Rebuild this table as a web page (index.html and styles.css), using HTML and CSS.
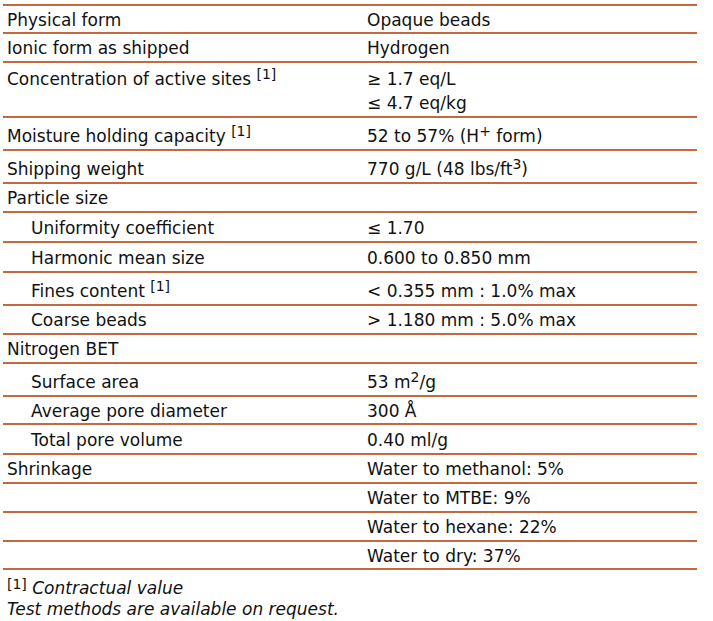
FILE: index.html
```html
<!DOCTYPE html>
<html lang="en">
<head>
<meta charset="utf-8">
<title>Properties</title>
<link rel="stylesheet" href="styles.css">
</head>
<body>
<div class="sheet">
  <table class="props">
    <tbody>
      <tr class="r28"><td class="label">Physical form</td><td class="value">Opaque beads</td></tr>
      <tr><td class="label">Ionic form as shipped</td><td class="value">Hydrogen</td></tr>
      <tr class="double"><td class="label">Concentration of active sites <sup>[1]</sup></td><td class="value">≥ 1.7 eq/L<br>≤ 4.7 eq/kg</td></tr>
      <tr class="tall"><td class="label">Moisture holding capacity <sup>[1]</sup></td><td class="value">52 to 57% (H<sup>+</sup> form)</td></tr>
      <tr class="tall"><td class="label">Shipping weight</td><td class="value">770 g/L (48 lbs/ft<sup>3</sup>)</td></tr>
      <tr><td class="label">Particle size</td><td class="value"></td></tr>
      <tr class="r30"><td class="label sub">Uniformity coefficient</td><td class="value">≤ 1.70</td></tr>
      <tr class="r30"><td class="label sub">Harmonic mean size</td><td class="value">0.600 to 0.850 mm</td></tr>
      <tr class="tall"><td class="label sub">Fines content <sup>[1]</sup></td><td class="value">&lt; 0.355 mm : 1.0% max</td></tr>
      <tr><td class="label sub">Coarse beads</td><td class="value">&gt; 1.180 mm : 5.0% max</td></tr>
      <tr><td class="label">Nitrogen BET</td><td class="value"></td></tr>
      <tr class="tall"><td class="label sub">Surface area</td><td class="value">53 m<sup>2</sup>/g</td></tr>
      <tr class="r28"><td class="label sub">Average pore diameter</td><td class="value">300 Å</td></tr>
      <tr class="r30"><td class="label sub">Total pore volume</td><td class="value">0.40 ml/g</td></tr>
      <tr><td class="label">Shrinkage</td><td class="value">Water to methanol: 5%</td></tr>
      <tr><td class="label"></td><td class="value">Water to MTBE: 9%</td></tr>
      <tr><td class="label"></td><td class="value">Water to hexane: 22%</td></tr>
      <tr class="r28"><td class="label"></td><td class="value">Water to dry: 37%</td></tr>
    </tbody>
  </table>
  <div class="notes">
    <p class="note"><sup>[1]</sup> <em>Contractual value</em></p>
    <p class="note"><em>Test methods are available on request.</em></p>
  </div>
</div>
</body>
</html>
```

FILE: styles.css
```css
html, body {
  margin: 0;
  padding: 0;
  background: #ffffff;
}

body {
  font-family: "DejaVu Sans", Verdana, sans-serif;
  font-size: 17px;
  color: #111111;
}

.sheet {
  padding: 4px 16px 0 3px;
}

.props {
  width: 694px;
  border-collapse: collapse;
  border-top: 2px solid #c2693f;
}

.props td {
  border-bottom: 2px solid #c2693f;
  padding: 2px 4px 1px 4px;
  line-height: 24px;
  vertical-align: top;
  white-space: nowrap;
}

.props tr.r28 td {
  padding-bottom: 0;
}

.props tr.r30 td {
  padding-top: 3px;
  padding-bottom: 1px;
}

.props tr.tall td {
  padding-top: 6px;
}

.props tr.double td {
  padding-top: 4px;
}

.props td.label {
  width: 352px;
}

.props td.label.sub {
  padding-left: 28px;
  width: 328px;
}

sup {
  font-size: 14px;
  line-height: 0;
  vertical-align: 6px;
}

.notes {
  padding: 8px 0 0 4px;
}

.note {
  margin: 0;
  line-height: 21px;
}

.note sup {
  vertical-align: 5px;
}

.note em {
  font-style: italic;
}
```
